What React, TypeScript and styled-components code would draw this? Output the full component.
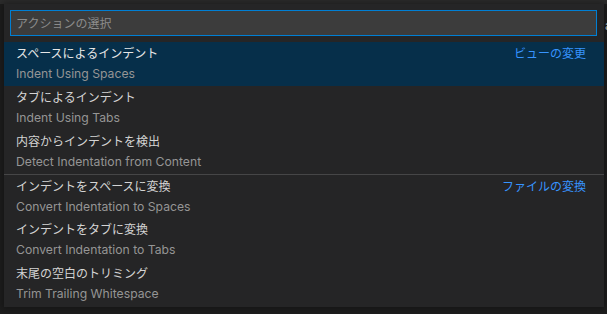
import React from "react"
import styled, { createGlobalStyle } from "styled-components"

const GlobalStyle = createGlobalStyle`
    html, body {
        margin: 0;
        padding: 0;
        background: #1e1e1e;
    }
`

const Workbench = styled.div`
    position: relative;
    width: 607px;
    height: 314px;
    overflow: hidden;
    background: #1e1e1e;
    font-family: Inter, "Noto Sans CJK JP", sans-serif;
`

const TabStrip = styled.div`
    height: 4px;
    background: #2d2d2d;
`

const EditorText = styled.div`
    padding: 12px 0 0 605px;
    font-size: 12px;
    line-height: 20px;
    color: #cccccc;
    white-space: nowrap;
`

const QuickPick = styled.div`
    position: absolute;
    top: 4px;
    left: 4px;
    width: 600px;
    background: #252526;
    box-shadow: 0 0 8px 2px rgba(0, 0, 0, 0.36);
    padding-bottom: 1px;
`

const InputRow = styled.div`
    padding: 6px 7px 6px 6px;
`

const InputBox = styled.input`
    box-sizing: border-box;
    width: 100%;
    height: 26px;
    margin: 0;
    padding: 0 5px;
    background: #3c3c3c;
    border: 1px solid #007fd4;
    outline: none;
    color: #cccccc;
    font-family: inherit;
    font-size: 12px;
    caret-color: #cccccc;

    &::placeholder {
        color: #8b8b8b;
    }
`

const List = styled.div`
    display: flex;
    flex-direction: column;
`

const Item = styled.div<{ $selected?: boolean; $separator?: boolean }>`
    display: flex;
    align-items: flex-start;
    height: 44px;
    box-sizing: border-box;
    padding: 2px 18px 2px 12px;
    background: ${props => props.$selected ? "#062f4a" : "transparent"};
    border-top: ${props => props.$separator ? "1px solid #464647" : "none"};
`

const ItemText = styled.div`
    flex: 1;
    display: flex;
    flex-direction: column;
`

const Label = styled.div<{ $selected?: boolean }>`
    font-size: 12px;
    line-height: 20px;
    color: ${props => props.$selected ? "#e6e6e6" : "#d4d4d4"};
`

const Detail = styled.div`
    font-size: 12.2px;
    line-height: 20px;
    color: #959595;
`

const GroupLabel = styled.div`
    font-size: 12px;
    line-height: 20px;
    color: #3794ff;
`

const items = [
    { label: "スペースによるインデント", detail: "Indent Using Spaces", group: "ビューの変更", selected: true },
    { label: "タブによるインデント", detail: "Indent Using Tabs" },
    { label: "内容からインデントを検出", detail: "Detect Indentation from Content" },
    { label: "インデントをスペースに変換", detail: "Convert Indentation to Spaces", group: "ファイルの変換", separator: true },
    { label: "インデントをタブに変換", detail: "Convert Indentation to Tabs" },
    { label: "末尾の空白のトリミング", detail: "Trim Trailing Whitespace" },
]

export default function App() {
    return (
        <Workbench>
            <GlobalStyle />
            <TabStrip />
            <EditorText>a</EditorText>

            <QuickPick>
                <InputRow>
                    <InputBox placeholder="アクションの選択" autoFocus />
                </InputRow>
                <List>
                    {items.map(item => (
                        <Item key={item.detail} $selected={item.selected} $separator={item.separator}>
                            <ItemText>
                                <Label $selected={item.selected}>{item.label}</Label>
                                <Detail>{item.detail}</Detail>
                            </ItemText>
                            {item.group && <GroupLabel>{item.group}</GroupLabel>}
                        </Item>
                    ))}
                </List>
            </QuickPick>
        </Workbench>
    )
}
